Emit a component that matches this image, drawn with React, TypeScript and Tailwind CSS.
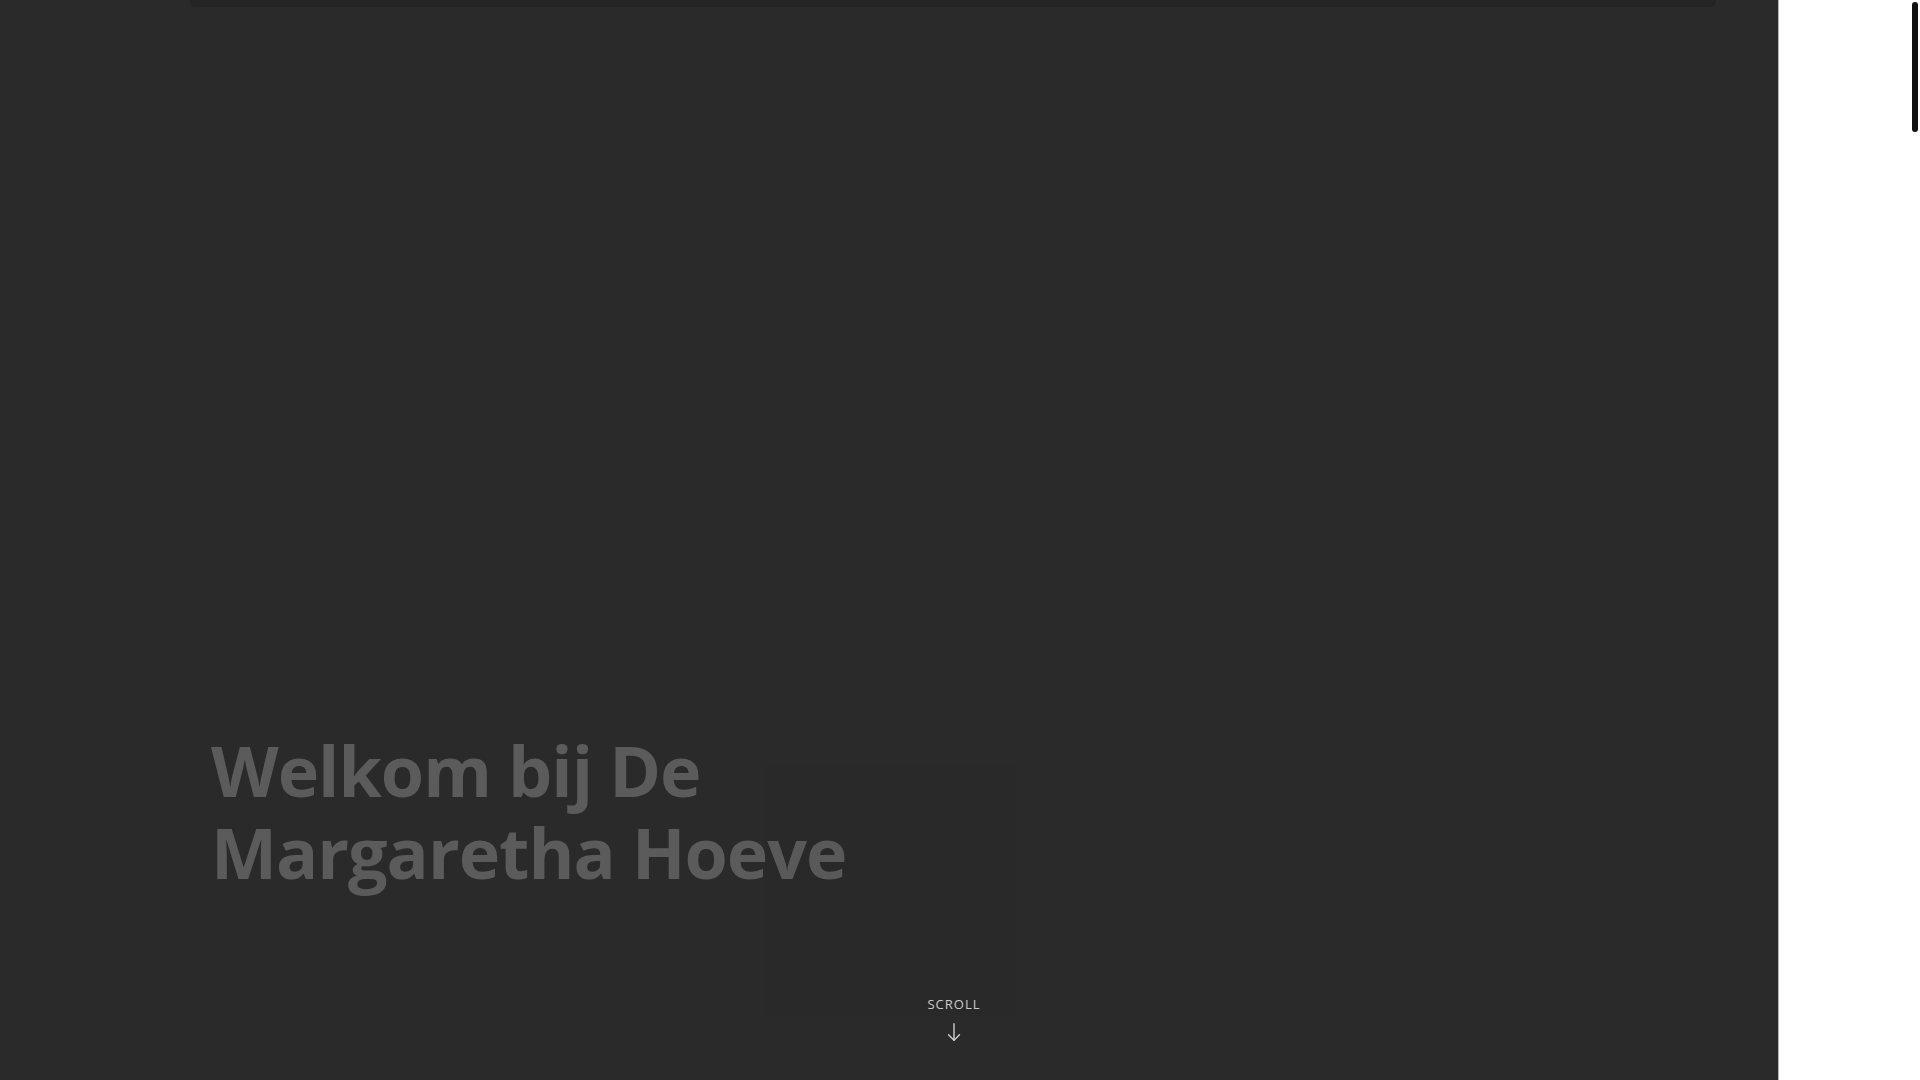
import React from 'react';

const App = () => {
  return (
    <div className="relative flex h-[1080px] w-[1920px] overflow-hidden bg-white font-['Open_Sans',sans-serif]">
      <section className="relative flex w-[1778px] shrink-0 flex-col bg-[#2a2a2a]">
        <header className="ml-[190px] h-[7px] w-[1526px] rounded-b-md bg-[#242424]"></header>

        <div className="ml-[211px] mt-[722px]">
          <h1 className="text-[70px] font-bold leading-[82px] tracking-[-1px] text-[#5b5b5b]">
            <span className="block">Welkom bij De</span>
            <span className="block">Margaretha Hoeve</span>
          </h1>
        </div>

        <div className="ml-[904px] mt-[103px] flex w-[100px] flex-col items-center text-[#d0d0d0]">
          <span className="text-[13px] leading-[16px] tracking-[1px]">SCROLL</span>
          <svg className="mt-[9px] h-[22px] w-[22px]" viewBox="0 0 24 24" fill="none" stroke="currentColor" strokeWidth={1.5} strokeLinecap="round" strokeLinejoin="round">
            <path d="M12 3v18" />
            <path d="M6 15l6 6 6-6" />
          </svg>
        </div>

        {/* faint placeholder square behind the title */}
        <div className="absolute left-[765px] top-[765px] h-[251px] w-[251px] bg-black/[0.02]"></div>
      </section>
      <div className="w-px shrink-0 bg-[#b5b5b5]"></div>
      <div className="flex-1"></div>

      {/* overlay scrollbar */}
      <div className="absolute right-[2px] top-[2px] h-[130px] w-[6px] rounded-full bg-[#111]"></div>
    </div>
  );
};

export default App;
